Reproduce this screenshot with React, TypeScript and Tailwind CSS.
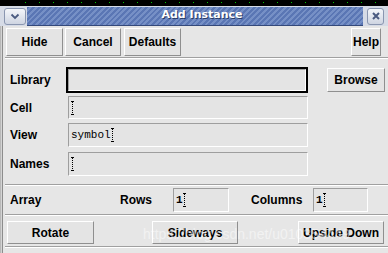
import type { ReactNode } from 'react';

function RaisedButton({ className, children }: { className: string; children: ReactNode }) {
  return (
    <div
      className={`flex items-center justify-center border border-t-white border-l-white border-b-[#8f8f8f] border-r-[#8f8f8f] bg-[#e4e4e4] text-[12px] font-bold text-black ${className}`}
    >
      {children}
    </div>
  );
}

function Cursor() {
  return (
    <span className="relative inline-block h-[14px] w-[3px] align-middle">
      <span className="absolute left-0 top-0 h-px w-[3px] bg-black" />
      <span className="absolute left-[1px] top-0 h-[14px] border-l border-dotted border-black" />
      <span className="absolute bottom-0 left-0 h-px w-[3px] bg-black" />
    </span>
  );
}

function Field({ className, value = '' }: { className: string; value?: string }) {
  return (
    <div
      className={`flex items-center border border-t-[#9e9e9e] border-l-[#9e9e9e] border-b-white border-r-white bg-[#e4e4e4] pl-[2px] font-['Liberation_Mono'] text-[11px] text-black ${className}`}
    >
      {value && <span>{value}</span>}
      <Cursor />
    </div>
  );
}

function Separator({ className }: { className: string }) {
  return <div className={`ml-[2px] h-[2px] border-t border-t-[#a0a0a0] border-b border-b-white ${className}`} />;
}

function FormRow({ label, className, children }: { label: string; className: string; children: ReactNode }) {
  return (
    <div className={`flex items-center pl-[7px] ${className}`}>
      <span className="w-[56px] text-[12px] font-bold">{label}</span>
      {children}
    </div>
  );
}

export default function App() {
  return (
    <div className="relative flex h-[253px] w-[388px] flex-col overflow-hidden bg-black font-['Liberation_Sans'] text-black">
      {/* desktop strip */}
      <div className="h-[6px] shrink-0 bg-black pt-[2px]">
        <div className="ml-[25px] h-px bg-[repeating-linear-gradient(90deg,#00c800_0_1px,transparent_1px_14px)]" />
      </div>

      {/* title bar */}
      <div className="flex h-[20px] shrink-0 items-center bg-[#d6dbe6]">
        <div className="ml-[4px] flex h-[17px] w-[22px] items-center justify-center rounded-[3px] border border-[#8a96b0] bg-[linear-gradient(#f4f6fa,#cfd5e2)]">
          <svg width="10" height="7" viewBox="0 0 10 7">
            <path d="M1.5 1.5 L5 5 L8.5 1.5" fill="none" stroke="#4a5a80" strokeWidth="1.8" />
          </svg>
        </div>
        <div className="ml-px flex h-[19px] flex-1 items-center justify-center border-b border-[#34497a] bg-[#5a76b4] bg-[repeating-linear-gradient(135deg,#5a76b4_0_2px,#7690c6_2px_4px)] pl-[14px]">
          <span className="font-['DejaVu_Sans'] text-[11px] font-bold text-white [text-shadow:1px_1px_0_#2a3c66]">
            Add Instance
          </span>
        </div>
        <div className="ml-[4px] mr-[4px] flex h-[17px] w-[17px] items-center justify-center rounded-[3px] border border-[#8a96b0] bg-[linear-gradient(#f4f6fa,#cfd5e2)]">
          <svg width="8" height="8" viewBox="0 0 8 8">
            <path d="M1 1 L7 7 M7 1 L1 7" stroke="#4a5a80" strokeWidth="2" />
          </svg>
        </div>
      </div>

      {/* body */}
      <div className="flex flex-1 bg-[#e6e6e6]">
        <div className="w-[3px] shrink-0 border-l border-r border-l-[#b8b8b8] border-r-[#8c8c8c] bg-[#d4d4d4]" />
        <div className="flex flex-1 flex-col">
          <div className="mt-[2px] flex h-[28px]">
            <RaisedButton className="ml-[3px] w-[57px]">Hide</RaisedButton>
            <RaisedButton className="ml-[2px] w-[56px]">Cancel</RaisedButton>
            <RaisedButton className="ml-[3px] w-[57px]">Defaults</RaisedButton>
            <RaisedButton className="ml-auto mr-[7px] w-[30px]">Help</RaisedButton>
          </div>
          <Separator className="mt-[1px]" />

          <FormRow label="Library" className="mt-[8px] h-[26px]">
            <div className="h-[26px] w-[242px] border-2 border-black">
              <div className="h-full border border-t-[#9e9e9e] border-l-[#9e9e9e] border-b-white border-r-white bg-[#e4e4e4]" />
            </div>
            <RaisedButton className="ml-[19px] h-[24px] w-[58px]">Browse</RaisedButton>
          </FormRow>
          <FormRow label="Cell" className="mt-[3px] h-[23px]">
            <Field className="ml-[2px] h-[23px] w-[240px]" />
          </FormRow>
          <FormRow label="View" className="mt-[4px] h-[24px]">
            <Field className="ml-[2px] h-[24px] w-[240px]" value="symbol" />
          </FormRow>
          <FormRow label="Names" className="mt-[5px] h-[24px]">
            <Field className="ml-[2px] h-[24px] w-[240px]" />
          </FormRow>

          <Separator className="mt-[8px]" />
          <div className="mt-[2px] flex h-[24px] items-center pl-[7px] text-[12px] font-bold">
            <span className="w-[110px]">Array</span>
            <span className="w-[53px]">Rows</span>
            <Field className="h-[24px] w-[56px]" value="1" />
            <span className="ml-[22px] w-[62px]">Columns</span>
            <Field className="h-[24px] w-[55px]" value="1" />
          </div>
          <Separator className="mt-[2px]" />

          <div className="mt-[5px] flex h-[23px]">
            <RaisedButton className="ml-[4px] w-[87px]">Rotate</RaisedButton>
            <RaisedButton className="ml-[58px] w-[86px]">Sideways</RaisedButton>
            <RaisedButton className="ml-[60px] w-[86px]">Upside Down</RaisedButton>
          </div>
          <Separator className="mt-[2px]" />
        </div>
      </div>

      {/* watermark */}
      <span className="pointer-events-none absolute left-[143px] top-[224px] text-[14px] text-white/50">
        https://blog.csdn.net/u010354449
      </span>
    </div>
  );
}
